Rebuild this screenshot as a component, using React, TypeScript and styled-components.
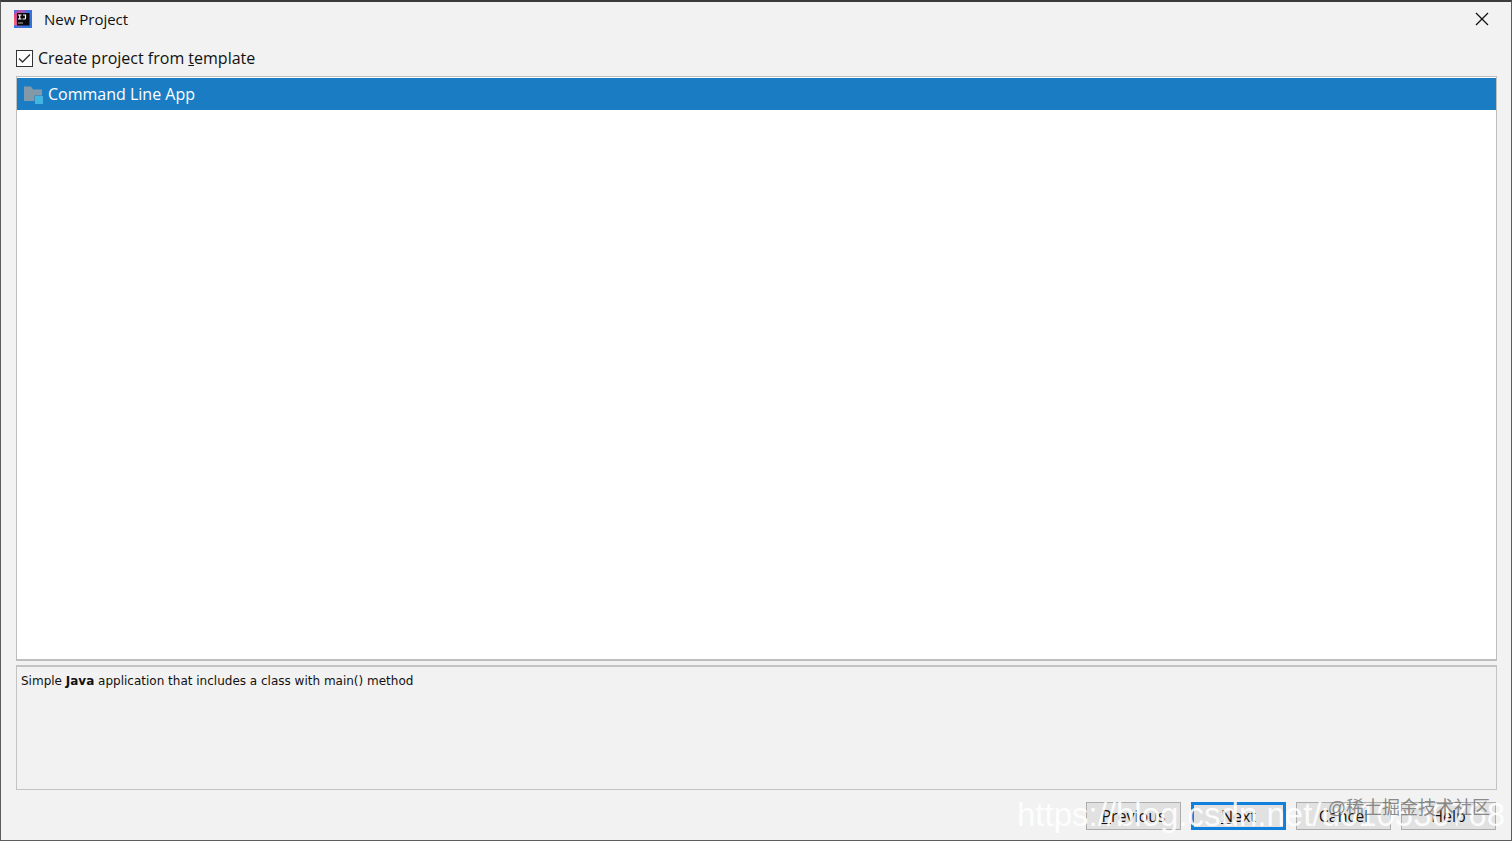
import React, { useState } from "react";
import styled, { createGlobalStyle } from "styled-components";

const GlobalStyle = createGlobalStyle`
  * { box-sizing: border-box; }
  body {
    margin: 0;
    font-family: "Open Sans", "Noto Sans CJK SC", sans-serif;
    font-size: 16px;
    color: #111;
  }
`;

const Dialog = styled.main`
  position: relative;
  display: flex;
  flex-direction: column;
  min-height: 100vh;
  padding: 0 14px 10px 15px;
  background: #f2f2f2;
  border: 1px solid #5c5c5c;
  border-top: 2px solid #3c3a3a;
`;

const TitleBar = styled.header`
  display: flex;
  align-items: center;
  height: 36px;
  margin-left: -2px;
  padding: 0 8px 2px 0;
`;

const Title = styled.h1`
  flex: 1;
  margin: 0 0 0 11px;
  font-size: 15px;
  line-height: 20px;
  font-weight: 400;
`;

const CloseButton = styled.button`
  display: flex;
  padding: 0;
  border: 0;
  background: none;
`;

const TemplateToggle = styled.label`
  display: flex;
  align-items: center;
  gap: 5px;
  height: 38px;
  padding-top: 2px;
`;

const CheckBox = styled.input`
  appearance: none;
  width: 17px;
  height: 17px;
  margin: 0;
  border: 1px solid #333;
  background: #fff url("data:image/svg+xml,%3Csvg xmlns='http://www.w3.org/2000/svg' viewBox='0 0 15 15'%3E%3Cpath d='M2 7.500 5.500 11 13 3.500' fill='none' stroke='%23333' stroke-width='1.400'/%3E%3C/svg%3E");
  &:not(:checked) { background: #fff; }
`;

const TemplateList = styled.ul`
  flex: 1;
  margin: 0;
  padding: 1px 0 0;
  list-style: none;
  background: #fff;
  border: 1px solid #bebebe;
  border-bottom-width: 2px;
`;

const TemplateItem = styled.li`
  display: flex;
  align-items: center;
  gap: 5px;
  height: 32px;
  padding-left: 6px;
  color: #fff;
  background: #1a7dc4;
`;

const Description = styled.p`
  height: 125px;
  margin: 4px 0 0;
  padding: 6px 4px;
  border: 1px solid #c3c3c3;
  border-top-width: 2px;
  font-family: "DejaVu Sans", sans-serif;
  font-size: 12px;
  line-height: 16px;
`;

const Actions = styled.footer`
  display: flex;
  justify-content: flex-end;
  gap: 10px;
  padding: 12px 1px 0 0;
`;

const ActionButton = styled.button<{ $primary?: boolean }>`
  width: 95px;
  height: 28px;
  padding: 0;
  font: inherit;
  line-height: 20px;
  color: #111;
  background: #e1e1e1;
  border: ${(p) => (p.$primary ? "3px solid #0f80dc" : "1px solid #adadad")};
`;

const SiteMark = styled.span`
  position: absolute;
  right: 6px;
  bottom: 6px;
  font-family: "Liberation Sans", sans-serif;
  font-size: 33px;
  line-height: 38px;
  color: rgba(255, 255, 255, 0.88);
  pointer-events: none;
`;

const AuthorMark = styled.span`
  position: absolute;
  right: 21px;
  bottom: 19px;
  font-family: "Liberation Sans", "Noto Sans CJK SC", sans-serif;
  font-size: 18px;
  line-height: 26px;
  color: rgba(110, 110, 110, 0.8);
  pointer-events: none;
`;

const AppLogo = () => (
  <svg width="19" height="19" viewBox="0 0 19 19" aria-hidden="true">
    <defs>
      <linearGradient id="ij" x1="0" y1="0.2" x2="1" y2="0.6">
        <stop offset="0" stopColor="#f0417a" />
        <stop offset="0.35" stopColor="#a45ab8" />
        <stop offset="0.65" stopColor="#3a75e0" />
        <stop offset="1" stopColor="#2f73dc" />
      </linearGradient>
    </defs>
    <path d="M0 0h18v18H0z" fill="url(#ij)" />
    <path d="M0 0h5L0 4z" fill="#5a6fd8" />
    <path d="M0 6l3 8-3 2z" fill="#f8606a" />
    <path d="M0 15l6 3H0z" fill="#2a7de8" />
    <path d="M3 3h12.500v12.500H3z" fill="#0a0808" />
    <path d="M4 5h3.500M5.750 5v4M4 9h3.500M9 5h2.500v3q0 1-1 1H8.500" fill="none" stroke="#fff" strokeWidth="1.200" />
    <path d="M4 13h5" stroke="#bbb" strokeWidth="1" />
  </svg>
);

const FolderIcon = () => (
  <svg width="20" height="20" viewBox="0 0 20 20" aria-hidden="true">
    <path d="M1 2.500h7l2 3h9V17H1z" fill="#8299aa" />
    <path d="M11.500 11.500H20V20h-8.500z" fill="#1a7dc4" />
    <path d="M12 12h8v8h-8z" fill="#40b6e0" />
  </svg>
);

export default function App() {
  const [fromTemplate, setFromTemplate] = useState(true);
  return (
    <>
      <GlobalStyle />
      <Dialog>
        <TitleBar>
          <AppLogo />
          <Title>New Project</Title>
          <CloseButton type="button" aria-label="Close">
            <svg width="14" height="14" viewBox="0 0 14 14">
              <path d="M1 1l12 12M13 1L1 13" stroke="#111" strokeWidth="1.300" />
            </svg>
          </CloseButton>
        </TitleBar>
        <TemplateToggle>
          <CheckBox type="checkbox" checked={fromTemplate} onChange={(e) => setFromTemplate(e.target.checked)} />
          <span>Create project from <u>t</u>emplate</span>
        </TemplateToggle>
        <TemplateList>
          <TemplateItem>
            <FolderIcon />
            Command Line App
          </TemplateItem>
        </TemplateList>
        <Description>
          Simple <b>Java</b> application that includes a class with main() method
        </Description>
        <Actions>
          <ActionButton type="button"><u>P</u>revious</ActionButton>
          <ActionButton type="button" $primary><u>N</u>ext</ActionButton>
          <ActionButton type="button">Cancel</ActionButton>
          <ActionButton type="button">Help</ActionButton>
        </Actions>
        <SiteMark>https://blog.csdn.net/u010530768</SiteMark>
        <AuthorMark>@稀土掘金技术社区</AuthorMark>
      </Dialog>
    </>
  );
}
